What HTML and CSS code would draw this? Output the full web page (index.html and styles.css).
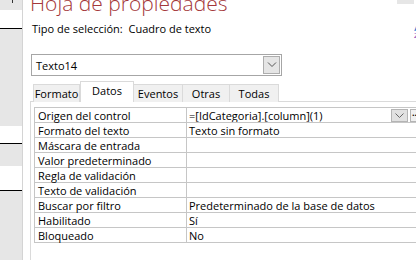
FILE: index.html
```html
<!DOCTYPE html>
<html lang="es">
<head>
    <meta charset="UTF-8">
    <title>Hoja de propiedades</title>
    <link rel="stylesheet" href="styles.css">
</head>
<body>
    <div class="window">
        <!-- franja del formulario a la izquierda -->
        <div class="sidebar">
            <div class="side-gray top"><span class="tick"></span></div>
            <div class="side-white b1"></div>
            <div class="side-gray mid1"></div>
            <div class="side-white b2"></div>
            <div class="side-gray mid2"></div>
            <div class="side-white b3"></div>
            <div class="side-gray rest"></div>
        </div>

        <div class="sheet">
            <div class="head-row">
                <h1 class="sheet-title">Hoja de propiedades</h1>
                <span class="head-bar"></span>
            </div>
            <div class="sel-row">
                <span class="sel-type">Tipo de selección:&nbsp; Cuadro de texto</span>
                <span class="sort-icon"><b class="az-a">A</b><b class="az-z">Z</b></span>
            </div>

            <div class="combo">
                <span class="combo-text">Texto14</span>
                <span class="combo-btn">
                    <svg width="10" height="6" viewBox="0 0 10 6"><path d="M1 0.5 L5 4.5 L9 0.5" fill="none" stroke="#555" stroke-width="1"/></svg>
                </span>
            </div>

            <div class="tabs">
                <span class="tab t-formato">Formato</span>
                <span class="tab t-datos active">Datos</span>
                <span class="tab t-eventos">Eventos</span>
                <span class="tab t-otras">Otras</span>
                <span class="tab t-todas">Todas</span>
            </div>

            <div class="tab-panel">
                <table class="props">
                    <tr>
                        <td class="name">Origen del control</td>
                        <td class="value">
                            <div class="value-row">
                                <span class="value-text">=[IdCategoria].[column](1)</span>
                                <span class="cell-drop">
                                    <svg width="9" height="5" viewBox="0 0 9 5"><path d="M0.5 0.5 L4.5 4.5 L8.5 0.5" fill="none" stroke="#666" stroke-width="1"/></svg>
                                </span>
                                <span class="cell-build">...</span>
                            </div>
                        </td>
                    </tr>
                    <tr><td class="name">Formato del texto</td><td class="value">Texto sin formato</td></tr>
                    <tr><td class="name">Máscara de entrada</td><td class="value"></td></tr>
                    <tr><td class="name">Valor predeterminado</td><td class="value"></td></tr>
                    <tr><td class="name">Regla de validación</td><td class="value"></td></tr>
                    <tr><td class="name">Texto de validación</td><td class="value"></td></tr>
                    <tr><td class="name">Buscar por filtro</td><td class="value">Predeterminado de la base de datos</td></tr>
                    <tr><td class="name">Habilitado</td><td class="value">Sí</td></tr>
                    <tr><td class="name">Bloqueado</td><td class="value">No</td></tr>
                </table>
            </div>
        </div>
    </div>
</body>
</html>
```

FILE: styles.css
```css
*{
    margin:0;
    padding:0;
    box-sizing: border-box;
}
html, body{
    width: 416px;
    height: 260px;
    overflow: hidden;
    background-color: #fff;
}
body{
    font-family: "Open Sans", "Liberation Sans", sans-serif;
    font-size: 11px;
    color: #000;
}
.window{
    display: flex;
    width: 416px;
    height: 260px;
}

/* franja izquierda */
.sidebar{
    width: 23px;
    flex: none;
    display: flex;
    flex-direction: column;
    border-right: 1px solid #d4d4d4;
}
.side-gray{
    background-color: #e6e6e6;
}
.side-white{
    background-color: #fff;
    border-bottom: 1px solid #000;
}
.side-gray.top{ height: 10px; position: relative; }
.tick{
    position: absolute;
    left: 12px;
    top: 0;
    width: 1px;
    height: 3px;
    background-color: #333;
}
.side-white.b1{ height: 19px; }
.side-gray.mid1{ height: 97px; }
.side-white.b2{ height: 18px; }
.side-gray.mid2{ height: 22px; }
.side-white.b3{ height: 25px; }
.side-gray.rest{ flex: 1; }

/* hoja de propiedades */
.sheet{
    flex: 1;
    min-width: 0;
    padding-left: 7px;
}
.head-row{
    display: flex;
    height: 15px;
}
.sheet-title{
    font-family: "Open Sans", "Liberation Sans", sans-serif;
    font-weight: 300;
    font-size: 21px;
    line-height: 24px;
    color: #a4373a;
    margin-top: -9px;
    white-space: nowrap;
}
.head-bar{
    margin-left: auto;
    width: 19px;
    height: 4px;
    background-color: #e6e6e6;
    border-right: 2px solid #fff;
    flex: none;
}
.sel-row{
    display: flex;
    align-items: flex-start;
    height: 30px;
    margin-left: 2px;
}
.sel-type{
    line-height: 16px;
    margin-top: 6px;
    white-space: nowrap;
}
.sort-icon{
    margin-left: auto;
    margin-right: -7px;
    margin-top: 10px;
    display: flex;
    flex-direction: column;
    width: 9px;
    font-family: "Liberation Sans", sans-serif;
    font-size: 8px;
    line-height: 7px;
}
.az-a{ color: #2f7fd4; }
.az-z{ color: #8a49b8; font-weight: normal; }

.combo{
    width: 251px;
    height: 22px;
    margin-top: 9px;
    margin-left: 1px;
    border: 1px solid #a6a6a6;
    display: flex;
    align-items: center;
    justify-content: space-between;
    padding: 0 1px 0 4px;
}
.combo-btn{
    width: 17px;
    height: 18px;
    background-color: #e5e5e5;
    border: 1px solid #adadad;
    display: flex;
    align-items: center;
    justify-content: center;
}

/* pestañas */
.tabs{
    display: flex;
    align-items: flex-end;
    margin-top: 5px;
    margin-left: 3px;
    height: 21px;
    position: relative;
    z-index: 1;
}
.tab{
    height: 18px;
    line-height: 17px;
    text-align: center;
    background-color: #f0f0f0;
    border: 1px solid #dadada;
    border-bottom: none;
    margin-right: -1px;
}
.tab.active{
    height: 21px;
    background-color: #fff;
    line-height: 18px;
}
.t-formato{ width: 47px; margin-right: 0; }
.t-datos{ width: 54px; }
.t-eventos{ width: 50px; }
.t-otras{ width: 48px; }
.t-todas{ width: 50px; }

.tab-panel{
    margin-top: -1px;
    margin-right: -60px;
    border: 1px solid #dadada;
    padding: 5px 0 30px 3px;
    background-color: #fff;
}

/* tabla de propiedades */
.props{
    border-collapse: collapse;
    width: 100%;
}
.props td{
    height: 15px;
    line-height: 13px;
    border: 1px solid #c6c6c6;
    padding: 0 3px;
    white-space: nowrap;
}
.props td.name{
    width: 152px;
}
.props td.value{
    padding-left: 2px;
}
.value-row{
    display: flex;
    align-items: center;
}
.value-text{
    width: 202px;
    flex: none;
    overflow: hidden;
}
.cell-drop{
    width: 17px;
    height: 13px;
    flex: none;
    background-color: #e1e1e1;
    border: 1px solid #b4b4b4;
    display: flex;
    align-items: center;
    justify-content: center;
}
.cell-build{
    width: 18px;
    height: 13px;
    flex: none;
    margin-left: 2px;
    background-color: #f0f0f0;
    border: 1px solid #b4b4b4;
    font-weight: bold;
    font-size: 9px;
    line-height: 6px;
    padding-left: 1px;
}
```
